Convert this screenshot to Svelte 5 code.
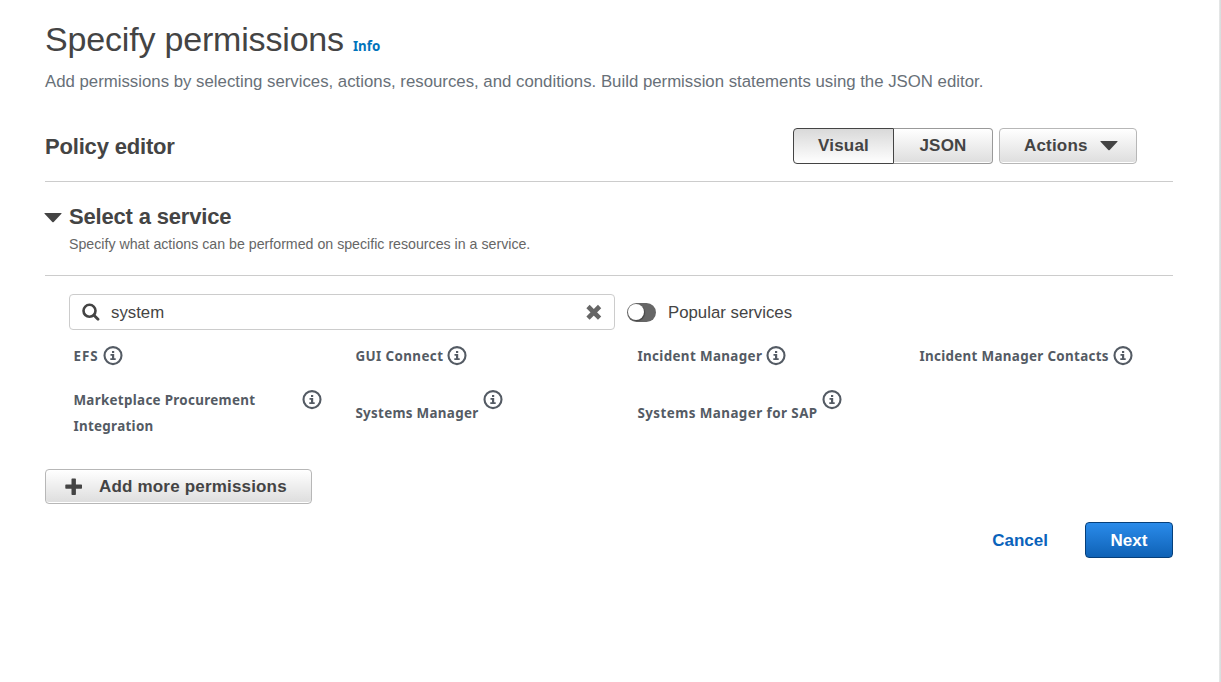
<script>
  let query = $state('system');
  const services = [
    { name: 'EFS', tracking: 1 },
    { name: 'GUI Connect', tracking: 0.4 },
    { name: 'Incident Manager', tracking: 0.36 },
    { name: 'Incident Manager Contacts', tracking: 0.32 },
    { name: 'Marketplace Procurement Integration', tracking: 0.31, wrap: true },
    { name: 'Systems Manager', tracking: 0.3, low: true },
    { name: 'Systems Manager for SAP', tracking: 0.44, low: true }
  ];
</script>

<div class="page">
  <main>
    <header>
      <h1>Specify permissions</h1>
      <a class="info">Info</a>
    </header>
    <p class="lead">Add permissions by selecting services, actions, resources, and conditions. Build permission statements using the JSON editor.</p>

    <section class="editor">
      <h2>Policy editor</h2>
      <div class="tabs">
        <button class="tab active">Visual</button>
        <button class="tab">JSON</button>
      </div>
      <button class="actions">
        Actions
        <svg width="18" height="10" viewBox="0 0 18 10"><path d="M.8 0h16.4q.8 0 .2.7L9.7 8.9q-.7.7-1.4 0L.6.7Q0 0 .8 0z" fill="#444" /></svg>
      </button>
    </section>

    <section class="service-head">
      <svg width="18" height="10" viewBox="0 0 18 10"><path d="M.8 0h16.4q.8 0 .2.7L9.7 8.9q-.7.7-1.4 0L.6.7Q0 0 .8 0z" fill="#444" /></svg>
      <div>
        <h2>Select a service</h2>
        <p>Specify what actions can be performed on specific resources in a service.</p>
      </div>
    </section>

    <section class="filter">
      <div class="search">
        <svg width="18" height="18" viewBox="0 0 18 18" fill="none" stroke="#444" stroke-linecap="round"><circle cx="7.5" cy="7.8" r="6" stroke-width="2.6" /><path d="M12.2 12.5l3.8 3.8" stroke-width="2.8" /></svg>
        <input bind:value={query} />
        <svg width="16" height="16" viewBox="0 0 16 16" fill="none" stroke="#666" stroke-width="4.6"><path d="M2 2.5l11.6 11.6M13.6 2.5L2 14.1" /></svg>
      </div>
      <span class="toggle"></span>
      <span class="popular">Popular services</span>
    </section>

    <div class="grid">
      {#each services as s}
        <div class="service" class:wrap={s.wrap} class:low={s.low}>
          <span style="letter-spacing: {s.tracking}px">{s.name}</span>
          <svg width="20" height="20" viewBox="0 0 20 20"><circle cx="10" cy="9.6" r="8.5" fill="none" stroke="#545b64" stroke-width="2.1" /><path d="M9 4.9h2.2v2H9zM7.5 7.9h3.7v4.3h1.5v1.9H7.3v-1.9H9V9.7H7.5z" fill="#545b64" /></svg>
        </div>
      {/each}
    </div>

    <button class="add">
      <svg width="18" height="18" viewBox="0 0 18 18"><path d="M7.2.4h3q.7 0 .7.7v5.4h5.4q.7 0 .7.7v2.8q0 .7-.7.7H10.9v5.5q0 .7-.7.7h-3q-.7 0-.7-.7V10.700H1q-.7 0-.7-.7V7.200q0-.7.7-.7h5.500V1.100q0-.7.7-.7z" fill="#444" /></svg>
      Add more permissions
    </button>

    <footer>
      <button class="cancel">Cancel</button>
      <button class="next">Next</button>
    </footer>
  </main>
</div>

<style>
  :global(body) { margin: 0; background: #fff; }
  * { box-sizing: border-box; }
  .page {
    width: 1221px; height: 682px; padding: 16px 48px 0 45px; overflow: hidden;
    font-family: "Liberation Sans", Arial, sans-serif; color: #444;
    background: linear-gradient(90deg, #e8e9e9, #d5dbdb) 1219px 0 / 2px 100% no-repeat #fff;
  }
  main { width: 1128px; }
  h1, h2, p { margin: 0; }
  svg { display: block; flex: none; }
  button { font: bold 17px/20px "Liberation Sans", Arial, sans-serif; color: #444; margin: 0; padding: 0; }
  header { display: flex; align-items: baseline; height: 46px; }
  h1 { font-size: 34px; letter-spacing: -.18px; font-weight: 400; line-height: 46px; white-space: nowrap; }
  .info { margin-left: 9px; font: bold 13.3px/20px "Noto Sans", sans-serif; color: #0073bb; }
  .lead { margin-top: 10px; font-size: 16.8px; line-height: 20px; color: #687078; white-space: nowrap; }
  .editor { display: flex; height: 90px; padding: 36px 36px 0 0; border-bottom: 1px solid #ccc; }
  h2 { font-size: 22px; letter-spacing: -.18px; line-height: 26px; font-weight: 700; }
  .editor h2 { flex: 1; padding-top: 6px; }
  .tabs { display: flex; }
  .tab, .actions, .add {
    height: 36px; border: 1px solid #b7b7b7; border-radius: 4px;
    background: linear-gradient(#fff, #ddd); box-shadow: inset 0 1px 0 #fff, inset 0 -1px 0 #fff;
    letter-spacing: .18px; white-space: nowrap;
  }
  .tab { width: 99px; border-color: #999; border-left: 0; border-radius: 0 4px 4px 0; }
  .tab.active { width: 101px; border: 1px solid #444; border-radius: 4px 0 0 4px; background: linear-gradient(#d9d9d9, #fff); box-shadow: none; }
  .actions { display: flex; align-items: center; justify-content: space-between; width: 138px; margin-left: 6px; padding: 0 18px 0 24px; }
  .service-head { display: flex; gap: 7px; height: 94px; padding-top: 22px; border-bottom: 1px solid #ccc; }
  .service-head svg { margin: 9px 0 0 -1px; }
  .service-head p { margin-top: 5px; font-size: 14.2px; line-height: 18px; color: #666; }
  .filter { display: flex; align-items: center; height: 36px; margin: 18px 0 0 24px; }
  .search { display: flex; align-items: center; width: 546px; height: 36px; border: 1px solid #ccc; border-radius: 4px; padding: 0 12px; }
  input { flex: 1; border: 0; outline: 0; padding: 2px 0 0; margin-left: 11px; background: none; font: 16.8px/20px "Liberation Sans", Arial, sans-serif; color: #444; }
  .toggle { width: 29px; height: 19px; margin-left: 12px; border-radius: 10px; background: #666; display: flex; align-items: center; }
  .toggle::before { content: ""; width: 16px; height: 16px; margin-left: 1px; border-radius: 50%; background: #fff; box-shadow: 1px 1px 1px #444; }
  .popular { margin-left: 12px; padding-top: 1px; font-size: 16.8px; }
  .grid { display: grid; grid-template-columns: repeat(4, 282px); grid-template-rows: 44px 52px; margin: 13px 0 0 28px; width: 1100px; }
  .service { display: flex; align-items: flex-start; gap: 4px; font: 700 13.4px/26px "Noto Sans", sans-serif; color: #545b64; white-space: nowrap; }
  .service span { padding-left: .4px; }
  .service svg { margin-top: 3px; }
  .wrap span { width: 225px; white-space: normal; }
  .low span { padding-top: 13px; }
  .add { display: flex; align-items: center; width: 267px; height: 35px; margin-top: 30px; padding: 0 19px; gap: 16px; }
  footer { display: flex; justify-content: flex-end; align-items: center; gap: 37px; margin-top: 18px; }
  .cancel { border: 0; background: none; color: #0a63bb; padding-top: 2px; }
  .next { width: 88px; height: 36px; padding-top: 1px; border: 1px solid #063f7a; border-radius: 4px; background: linear-gradient(#2a8bea, #0f62b6); color: #fff; }
</style>
